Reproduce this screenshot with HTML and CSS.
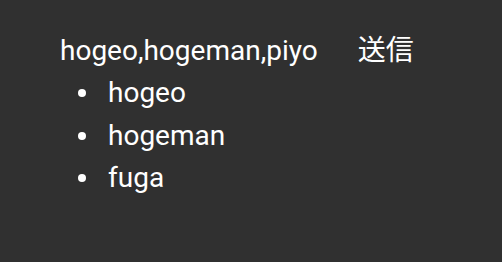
FILE: index.html
```html
<!DOCTYPE html>
<html>
<head>
<meta charset="utf-8">
<link rel="stylesheet" href="styles.css">
</head>
<body>
<div class="app">
  <div class="row">
    <span class="value">hogeo,hogeman,piyo</span>
    <span class="send">送信</span>
  </div>
  <ul class="list">
    <li class="item">hogeo</li>
    <li class="item">hogeman</li>
    <li class="item">fuga</li>
  </ul>
</div>
</body>
</html>
```
FILE: styles.css
```css
html, body {
  margin: 0;
  background: #303030;
}
.app {
  padding: 30px 0 0 60px;
  color: #ffffff;
  font-family: Roboto, "Noto Sans CJK JP", sans-serif;
  font-size: 28px;
  line-height: 42px;
}
.row {
  display: flex;
  gap: 40px;
}
.list {
  margin: 0;
  padding-left: 18px;
  list-style: none;
}
.item {
  display: flex;
  align-items: center;
  line-height: 42.5px;
}
.item::before {
  content: "";
  width: 8px;
  height: 8px;
  border-radius: 50%;
  background: #ffffff;
  margin-right: 22px;
  flex: none;
}
```
